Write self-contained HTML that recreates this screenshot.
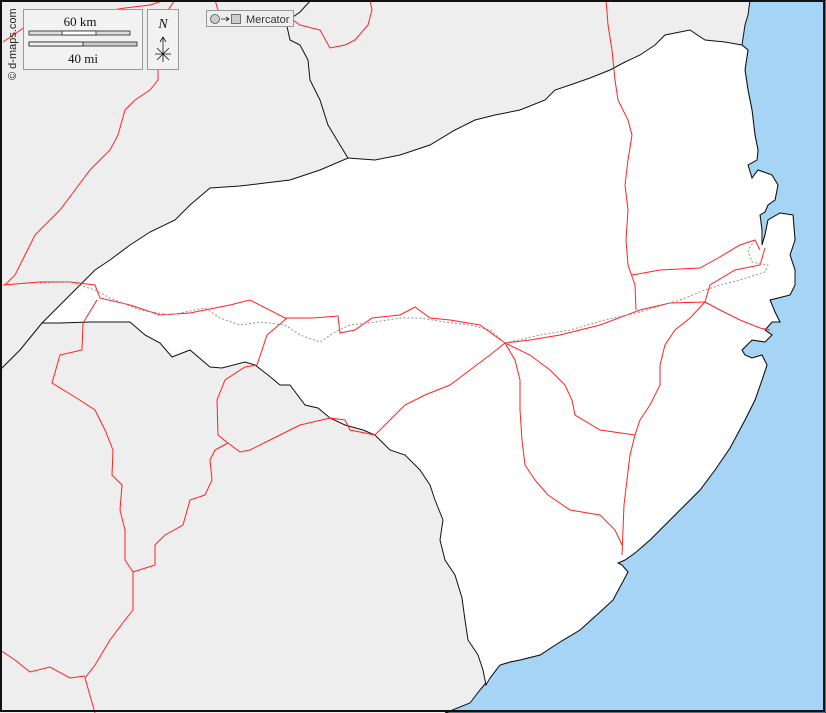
<!DOCTYPE html>
<html><head><meta charset="utf-8"><style>
html,body{margin:0;padding:0;width:826px;height:713px;overflow:hidden;background:#eee}
svg{display:block}
</style></head><body>
<svg width="826" height="713" viewBox="0 0 826 713" xmlns="http://www.w3.org/2000/svg">
<rect width="826" height="713" fill="#eeeeee"/>
<!-- sea -->
<path d="M750,0 L826,0 L826,713 L445,713 L470,703 L480,690 L490,678 L500,665 L510,662 L520,660 L540,655 L560,642 L580,630 L600,612 L613,600 L628,572 L622,565 L618,563 L625,560 L635,553 L650,540 L665,525 L685,505 L700,490 L715,470 L730,448 L745,420 L755,400 L762,380 L767,365 L762,355 L752,358 L745,355 L742,350 L752,340 L765,342 L772,335 L765,330 L772,322 L780,322 L775,312 L770,300 L790,295 L795,285 L795,270 L790,255 L795,240 L793,215 L780,213 L768,220 L765,235 L762,245 L762,230 L760,215 L765,212 L768,205 L775,200 L778,185 L772,175 L758,170 L752,178 L748,165 L757,160 L758,150 L755,135 L752,110 L748,90 L745,70 L748,50 L742,45 L745,25 L748,15 Z" fill="#a6d4f5" stroke="#111" stroke-width="1"/>
<!-- white region -->
<path d="M42,323 L60,305 L80,285 L95,270 L110,260 L130,245 L150,232 L175,220 L190,205 L210,188 L240,186 L265,183 L290,180 L320,170 L348,158 L375,160 L400,155 L430,145 L455,130 L475,120 L495,115 L520,110 L545,100 L555,90 L570,85 L590,78 L610,70 L625,62 L640,55 L655,45 L665,35 L680,32 L690,30 L705,40 L725,42 L742,45 L748,50 L745,70 L748,90 L752,110 L755,135 L758,150 L757,160 L748,165 L752,178 L758,170 L772,175 L778,185 L775,200 L768,205 L765,212 L760,215 L762,230 L762,245 L765,235 L768,220 L780,213 L793,215 L795,240 L790,255 L795,270 L795,285 L790,295 L770,300 L775,312 L780,322 L772,322 L765,330 L772,335 L765,342 L752,340 L742,350 L745,355 L752,358 L762,355 L767,365 L762,380 L755,400 L745,420 L730,448 L715,470 L700,490 L685,505 L665,525 L650,540 L635,553 L625,560 L618,563 L622,565 L628,572 L613,600 L600,612 L580,630 L560,642 L540,655 L520,660 L510,662 L500,665 L490,678 L486,685 L483,670 L478,655 L468,640 L465,620 L462,598 L455,575 L445,560 L440,540 L443,520 L435,500 L430,485 L420,470 L405,455 L390,450 L375,435 L363,430 L345,425 L330,418 L318,408 L305,405 L290,385 L280,385 L268,375 L255,365 L245,362 L222,368 L210,367 L190,350 L172,357 L160,343 L145,335 L130,322 L90,322 L60,323 Z" fill="#ffffff" stroke="#111" stroke-width="1"/>
<!-- other black borders -->
<g fill="none" stroke="#111" stroke-width="1">
<path d="M0,370 L20,350 L42,323"/>
<path d="M348,158 L340,145 L328,125 L320,100 L310,80 L308,60 L300,45 L290,40 L286,22 L300,12 L311,0"/>
</g>
<!-- red lines -->
<g fill="none" stroke="#f22" stroke-width="1">
<path d="M3,285 L40,282 L70,282 L95,285 L100,298 L130,305 L160,315 L190,313 L230,305 L250,300 L285,318 L313,318 L338,316 L340,333 L355,330 L372,318 L400,315 L415,307 L430,318 L450,320 L480,325 L505,343 L530,340 L560,335 L600,325 L640,310 L670,303 L705,302"/>
<path d="M175,0 L168,10 L158,30 L158,80 L150,90 L135,100 L125,110 L118,135 L110,150 L100,160 L90,170 L75,190 L60,210 L45,225 L35,235 L25,255 L15,275 L5,285"/>
<path d="M3,42 L25,27 L45,13 L60,18 L100,12 L125,8 L150,5 L165,0"/>
<path d="M215,0 L218,10 L225,20"/>
<path d="M290,18 L300,25 L320,30 L330,48 L345,45 L355,40 L368,25 L372,10 L370,0"/>
<path d="M606,0 L608,25 L612,50 L615,80 L618,100 L628,120 L632,135 L628,160 L625,185 L628,210 L626,240 L628,265 L635,285 L636,310"/>
<path d="M632,275 L660,270 L700,268 L718,258 L740,245 L755,240 L760,250"/>
<path d="M705,302 L710,285 L735,270 L760,265 L765,248"/>
<path d="M705,302 L720,310 L740,320 L760,328 L770,330"/>
<path d="M705,302 L690,318 L675,330 L665,345 L660,365 L660,385 L650,405 L640,420 L635,435 L630,455 L627,480 L624,505 L623,530 L622,555"/>
<path d="M505,343 L515,360 L520,380 L520,410 L522,440 L525,465 L535,480 L548,495 L570,510 L600,515 L615,530 L622,545"/>
<path d="M505,343 L530,355 L550,370 L565,385 L572,400 L575,415 L600,430 L635,435"/>
<path d="M505,343 L490,355 L470,370 L450,385 L425,395 L405,405 L390,420 L375,435"/>
<path d="M375,435 L350,430 L345,420 L330,418 L300,425 L270,440 L250,450 L240,452 L228,443 L218,435 L217,400 L225,380 L245,367 L257,365 L267,335 L287,318"/>
<path d="M228,443 L215,450 L210,460 L212,480 L205,495 L190,500 L183,525 L165,535 L155,545 L155,565 L133,572"/>
<path d="M97,300 L83,323 L82,350 L60,355 L52,383 L75,397 L95,410 L105,430 L113,450 L112,475 L122,485 L120,510 L125,530 L125,560 L133,572 L133,610 L125,620 L110,640 L95,665 L85,678 L95,713"/>
<path d="M0,650 L15,660 L30,672 L50,667 L70,678 L85,676"/>
</g>
<!-- dotted lines -->
<g fill="none" stroke="#9a8f8a" stroke-width="1" stroke-dasharray="2,2">
<path d="M40,283 L70,282 L95,290 L110,298 L140,310 L170,315 L205,308 L220,318 L240,325 L260,322 L285,325 L300,335 L320,342 L335,332 L350,325 L375,322 L400,318 L420,318 L445,322 L470,325 L490,330 L505,343 L540,335 L570,330 L605,320 L640,312 L680,300 L705,290 L720,285 L740,280 L765,272 L768,265 L752,262 L748,250 L755,240"/>
</g>
<!-- frame -->
<rect x="1" y="1" width="823" height="710" fill="none" stroke="#111" stroke-width="2"/>
<!-- legend boxes -->
<rect x="23.5" y="9.5" width="119" height="60" fill="#f2f2f2" stroke="#999"/>
<text x="80" y="26" font-family="Liberation Serif,serif" font-size="13" text-anchor="middle" fill="#111">60 km</text>
<rect x="29" y="31" width="101" height="4" fill="#ddd" stroke="#222" stroke-width="0.8"/>
<rect x="62" y="31" width="34" height="4" fill="#fff" stroke="#222" stroke-width="0.8"/>
<rect x="29" y="42" width="108" height="4" fill="#ccc" stroke="#222" stroke-width="0.8"/>
<rect x="29" y="42" width="54" height="4" fill="#eee" stroke="#222" stroke-width="0.8"/>
<text x="83" y="63" font-family="Liberation Serif,serif" font-size="13" text-anchor="middle" fill="#111">40 mi</text>
<rect x="147.5" y="9.5" width="31" height="60" fill="#f2f2f2" stroke="#999"/>
<text x="163" y="28" font-family="Liberation Serif,serif" font-style="italic" font-size="14" text-anchor="middle" fill="#111">N</text>
<path d="M163,54 L163,38 M160,42 L163,37 L166,42 M155,54 L171,54 M157,48 L169,60 M169,48 L157,60 M163,50 L163,62" stroke="#111" stroke-width="0.8" fill="none"/>
<rect x="206.5" y="10.5" width="87" height="16" fill="#eee" stroke="#999"/>
<circle cx="215" cy="19" r="4.5" fill="#ccc" stroke="#555" stroke-width="0.8"/>
<path d="M221,19 L229,19 M226,17 L229,19 L226,21" stroke="#222" stroke-width="0.8" fill="none"/>
<rect x="231.5" y="14.5" width="9" height="9" fill="#ccc" stroke="#555" stroke-width="0.8"/>
<text x="246" y="23" font-family="Liberation Sans,sans-serif" font-size="11" fill="#333">Mercator</text>
<text transform="translate(16,80) rotate(-90)" font-family="Liberation Sans,sans-serif" font-size="11" fill="#222">© d-maps.com</text>
</svg>
</body></html>
